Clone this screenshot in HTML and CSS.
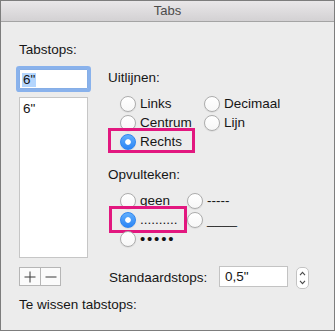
FILE: index.html
```html
<!DOCTYPE html>
<html>
<head>
<meta charset="utf-8">
<title>Tabs</title>
<link rel="stylesheet" href="styles.css">
</head>
<body>
<div class="window">
  <div class="titlebar">Tabs</div>
  <div class="content">
    <div class="main">
      <div class="left">
        <div class="label">Tabstops:</div>
        <div class="field focus"><span class="sel">6"</span></div>
        <div class="list"><div class="item">6"</div></div>
      </div>
      <div class="right">
        <div class="label">Uitlijnen:</div>
        <div class="radios align">
          <div class="radio"><span class="dot"></span><span>Links</span></div>
          <div class="radio"><span class="dot"></span><span>Decimaal</span></div>
          <div class="radio"><span class="dot"></span><span>Centrum</span></div>
          <div class="radio"><span class="dot"></span><span>Lijn</span></div>
          <div class="radio checked mark mark-rechts"><span class="dot"></span><span>Rechts</span></div>
        </div>
        <div class="label section">Opvulteken:</div>
        <div class="radios fill">
          <div class="radio"><span class="dot"></span><span>geen</span></div>
          <div class="radio"><span class="dot"></span><span>-----</span></div>
          <div class="radio checked mark mark-dots"><span class="dot"></span><span>..........</span></div>
          <div class="radio"><span class="dot"></span><span>____</span></div>
          <div class="radio"><span class="dot"></span><span class="bullets">•••••</span></div>
        </div>
      </div>
    </div>
    <div class="bottom">
      <div class="seg">
        <div class="segbtn"><svg width="12" height="12" viewBox="0 0 12 12"><path d="M6 0.5V11.5M0.5 6H11.5" stroke="#3a3a3a" stroke-width="1" fill="none"/></svg></div>
        <div class="segbtn"><svg width="12" height="12" viewBox="0 0 12 12"><path d="M0.5 6H11.5" stroke="#3a3a3a" stroke-width="1" fill="none"/></svg></div>
      </div>
      <div class="label std">Standaardstops:</div>
      <div class="field small">0,5"</div>
      <div class="stepper">
        <svg width="13" height="22" viewBox="0 0 13 22">
          <rect x="0.5" y="0.5" width="12" height="21" rx="4.5" fill="#fff" stroke="#c3c3c3"/>
          <path d="M4 8.2L6.5 5.4L9 8.2" fill="none" stroke="#4a4a4a" stroke-width="1.1"/>
          <path d="M4 13.8L6.5 16.6L9 13.8" fill="none" stroke="#4a4a4a" stroke-width="1.1"/>
        </svg>
      </div>
    </div>
    <div class="label wis">Te wissen tabstops:</div>
  </div>
</div>
</body>
</html>
```
FILE: styles.css
```css
* { box-sizing: border-box; }
html, body { margin: 0; padding: 0; }
body {
  font-family: "Liberation Sans", Arial, sans-serif;
  font-size: 13.5px;
  color: #161616;
  background: #ececec;
}
.window {
  width: 335px;
  height: 331px;
  border: 1px solid #7d7d7d;
  background: #ececec;
  display: flex;
  flex-direction: column;
}
.titlebar {
  height: 21px;
  border-bottom: 1px solid #a4a4a4;
  background: linear-gradient(#e9e7e9, #d3d1d3);
  text-align: center;
  font-size: 13px;
  line-height: 20px;
  color: #4b4b4b;
}
.content {
  padding: 20px 18px 0 18px;
  display: flex;
  flex-direction: column;
}
.main { display: flex; }
.left { width: 69px; display: flex; flex-direction: column; }
.right { margin-left: 20px; padding-top: 28px; flex: 1; }
.label { line-height: 16px; white-space: nowrap; }
.field {
  background: #fff;
  border: 1px solid #c3c3c3;
  height: 20px;
}
.focus {
  margin-top: 11px;
  border-color: #86aee6;
  border-radius: 1px;
  box-shadow: 0 0 0 3px rgba(112, 164, 236, 0.8);
  padding: 2px 0 0 2px;
}
.sel {
  display: inline-block;
  background: #b4d6fe;
  line-height: 14px;
  padding: 0 1px;
}
.list {
  margin-top: 8px;
  height: 161px;
  background: #fff;
  border: 1px solid #c6c6c6;
  padding: 3px 3px;
}
.item { line-height: 16px; }
.radios {
  display: grid;
  grid-auto-rows: 19px;
  padding-left: 12px;
  margin-top: 8px;
}
.align { grid-template-columns: 84px auto; }
.fill { grid-template-columns: 67px auto; }
.section { margin-top: 16px; }
.radio {
  display: flex;
  align-items: center;
  white-space: nowrap;
  position: relative;
}
.dot {
  width: 16px;
  height: 16px;
  flex: none;
  border-radius: 50%;
  background: linear-gradient(#ffffff, #f7f7f7);
  border: 1px solid #adadad;
  box-shadow: 0 0.5px 1px rgba(0, 0, 0, 0.12);
  margin-right: 4px;
}
.checked .dot {
  border-color: #2f86f0;
  background: radial-gradient(circle, #ffffff 0, #ffffff 2.4px, rgba(255,255,255,0) 3.2px),
              linear-gradient(#62affd, #2c85f5);
}
.bullets { font-size: 15px; letter-spacing: 1.8px; }
.mark::before {
  content: "";
  position: absolute;
  border: 3px solid #e2177f;
}
.mark-rechts::before { left: -12px; right: 9px; top: -4px; bottom: -2px; }
.mark-dots::before { left: -11px; right: 0; top: -4px; bottom: -4px; }
.bottom {
  display: flex;
  align-items: flex-start;
  margin-top: 8px;
}
.seg {
  margin-top: 1px;
  display: flex;
  border: 1px solid #b6b6b6;
  background: #fbfbfb;
  height: 19px;
}
.segbtn {
  width: 20px;
  display: flex;
  align-items: center;
  justify-content: center;
}
.segbtn + .segbtn { border-left: 1px solid #b6b6b6; }
.std { margin-left: 48px; margin-top: 4px; width: 110px; }
.small {
  width: 69px;
  height: 21px;
  line-height: 19px;
  padding-left: 5px;
}
.stepper { margin-left: 8px; margin-top: 1px; height: 22px; }
.stepper svg { display: block; }
.wis { margin-top: 8px; }
```
